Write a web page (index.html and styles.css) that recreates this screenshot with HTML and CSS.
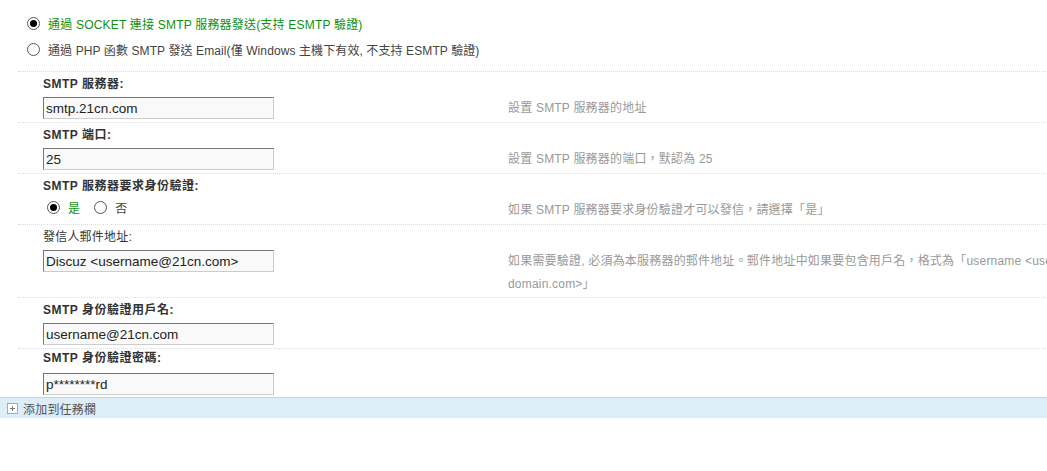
FILE: index.html
```html
<!DOCTYPE html>
<html lang="zh-Hant">
<head>
    <meta charset="UTF-8">
    <title>郵件設置</title>
    <link rel="stylesheet" href="styles.css">
</head>
<body>
    <div class="methods">
        <label class="opt checked"><input type="radio" name="mailsend" checked> 通過 SOCKET 連接 SMTP 服務器發送(支持 ESMTP 驗證)</label>
        <label class="opt"><input type="radio" name="mailsend"> 通過 PHP 函數 SMTP 發送 Email(僅 Windows 主機下有效, 不支持 ESMTP 驗證)</label>
    </div>

    <div class="settings">
        <div class="setting">
            <div class="label">SMTP 服務器:</div>
            <div class="field">
                <div class="control"><input type="text" value="smtp.21cn.com"></div>
                <div class="tips">設置 SMTP 服務器的地址</div>
            </div>
        </div>
        <div class="setting">
            <div class="label">SMTP 端口:</div>
            <div class="field">
                <div class="control"><input type="text" value="25"></div>
                <div class="tips">設置 SMTP 服務器的端口，默認為 25</div>
            </div>
        </div>
        <div class="setting">
            <div class="label">SMTP 服務器要求身份驗證:</div>
            <div class="field">
                <div class="control radios">
                    <label class="opt checked"><input type="radio" name="auth" checked> 是</label>
                    <label class="opt"><input type="radio" name="auth"> 否</label>
                </div>
                <div class="tips">如果 SMTP 服務器要求身份驗證才可以發信，請選擇「是」</div>
            </div>
        </div>
        <div class="setting">
            <div class="label plain">發信人郵件地址:</div>
            <div class="field">
                <div class="control"><input type="text" value="Discuz <username@21cn.com>"></div>
                <div class="tips">如果需要驗證, 必須為本服務器的郵件地址。郵件地址中如果要包含用戶名，格式為「username &lt;username@<wbr>domain.com&gt;」</div>
            </div>
        </div>
        <div class="setting">
            <div class="label">SMTP 身份驗證用戶名:</div>
            <div class="field">
                <div class="control"><input type="text" value="username@21cn.com"></div>
                <div class="tips"></div>
            </div>
        </div>
        <div class="setting last">
            <div class="label">SMTP 身份驗證密碼:</div>
            <div class="field">
                <div class="control"><input type="text" value="p********rd"></div>
                <div class="tips"></div>
            </div>
        </div>
    </div>

    <div class="taskbar">
        <span class="plus-box"></span>
        <span>添加到任務欄</span>
    </div>
</body>
</html>
```

FILE: styles.css
```css
html, body {
    overflow: hidden;
}
body {
    margin: 0;
    font-family: "Liberation Sans", "Noto Sans CJK TC", sans-serif;
    font-size: 12px;
    letter-spacing: 0.2px;
    color: #333;
    background: #fff;
}

/* radio buttons drawn by hand so they look like the classic ones */
input[type="radio"] {
    appearance: none;
    -webkit-appearance: none;
    width: 13px;
    height: 13px;
    margin: 0 6px 0 0;
    border: 1px solid #555;
    border-radius: 50%;
    background: #fff;
    box-sizing: border-box;
    position: relative;
    flex: none;
}
input[type="radio"]:checked::after {
    content: "";
    position: absolute;
    top: 2px;
    left: 2px;
    width: 7px;
    height: 7px;
    border-radius: 50%;
    background: #000;
}

.opt {
    display: flex;
    align-items: center;
    color: #444;
    white-space: nowrap;
}
.opt.checked {
    color: #109010;
}

.methods {
    padding: 10px 0 9px 27px;
}
.methods .opt {
    height: 26px;
    gap: 2px;
}
.methods .opt:last-child {
    letter-spacing: 0.1px;
}

.settings {
    margin-left: 18px;
    width: 1200px;
}
.setting {
    border-top: 1px dotted #ddd;
    padding-left: 25px;
}
.setting.last .label {
    padding-top: 1px;
}
.setting.last .field {
    padding-top: 7px;
}
.label {
    padding-top: 4px;
    line-height: 16px;
    font-weight: bold;
    letter-spacing: 0.5px;
    color: #333;
}
.label.plain {
    font-weight: normal;
    letter-spacing: 0.2px;
}
.field {
    display: grid;
    grid-template-columns: 465px 600px;
    padding-top: 5px;
    padding-bottom: 1px;
}
.control {
    min-height: 24px;
}
.control input[type="text"] {
    display: block;
    width: 231px;
    height: 22px;
    box-sizing: border-box;
    margin: 0 0 2px;
    padding: 0 2px;
    border: 1px solid #ccc;
    border-top-color: #777;
    border-left-color: #777;
    background: #f9f9f9;
    font-family: "Liberation Sans", sans-serif;
    font-size: 13.5px;
    letter-spacing: 0;
    color: #222;
    outline: none;
}
.radios {
    display: flex;
    align-items: flex-start;
    gap: 14px;
    padding-left: 4px;
}
.radios .opt {
    height: 16px;
    gap: 2px;
}
.radios .opt input {
    margin-right: 6px;
}
.tips {
    line-height: 23px;
    color: #999;
}

.taskbar {
    display: flex;
    align-items: center;
    gap: 5px;
    height: 20px;
    padding-left: 7px;
    margin-top: -1px;
    border-top: 1px solid #c5d7df;
    background: #deeef8;
    color: #555;
}
.plus-box {
    width: 11px;
    height: 11px;
    box-sizing: border-box;
    border: 1px solid #aaa;
    background: #fff;
    position: relative;
}
.plus-box::before,
.plus-box::after {
    content: "";
    position: absolute;
    background: #777;
}
.plus-box::before {
    left: 2px;
    top: 4px;
    width: 5px;
    height: 1px;
}
.plus-box::after {
    left: 4px;
    top: 2px;
    width: 1px;
    height: 5px;
}
```
